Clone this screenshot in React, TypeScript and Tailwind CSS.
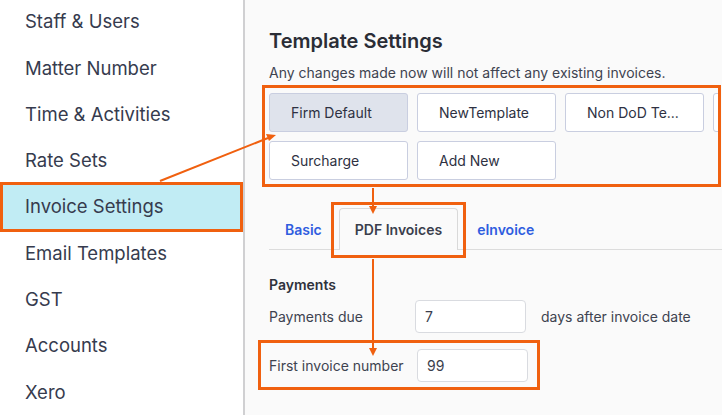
import React from 'react';

const ORANGE = '#f0600f';

const navItems = [
  'Staff & Users',
  'Matter Number',
  'Time & Activities',
  'Rate Sets',
  'Invoice Settings',
  'Email Templates',
  'GST',
  'Accounts',
  'Xero',
];

const templatesRow1 = ['Firm Default', 'NewTemplate', 'Non DoD Te...', ''];
const templatesRow2 = ['Surcharge', 'Add New'];

function TemplateButton({ label, active }: { label: string; active?: boolean }) {
  return (
    <div
      className={`flex h-[39px] w-[139px] shrink-0 items-center rounded-[3px] border border-[#c9cee0] pl-[21px] text-[14px] text-[#2e3142] ${
        active ? 'bg-[#dfe3ec]' : 'bg-white'
      }`}
    >
      {label}
    </div>
  );
}

function Arrows() {
  return (
    <svg className="pointer-events-none absolute inset-0" width="722" height="415" viewBox="0 0 722 415">
      <g stroke={ORANGE} strokeWidth="2" fill="none">
        <line x1="160" y1="181" x2="268" y2="138" />
        <line x1="373" y1="188" x2="373" y2="207" />
        <line x1="373" y1="259" x2="373" y2="349" />
      </g>
      <g fill={ORANGE}>
        <polygon points="276,135 266,134 269,141" />
        <polygon points="373,214 369,206 377,206" />
        <polygon points="373,356 369,348 377,348" />
      </g>
    </svg>
  );
}

export default function App() {
  return (
    <div
      className="relative flex h-[415px] w-[722px] overflow-hidden bg-[#fafafa]"
      style={{ fontFamily: 'Inter, "Noto Sans", sans-serif' }}
    >
      <aside className="w-[245px] shrink-0 border-r-2 border-[#d0d0d2] bg-white">
        <ul className="-mt-[1px]">
          {navItems.map((item) => {
            const active = item === 'Invoice Settings';
            return (
              <li
                key={item}
                className={`relative flex h-[46.3px] items-center pl-[25px] text-[18.5px] text-[#363b4e] ${
                  active ? 'bg-[#c1ecf4]' : ''
                }`}
              >
                {item}
                {active && (
                  <span className="absolute -inset-y-[2px] left-0 right-0 border-[3px] border-[#f0600f]" />
                )}
              </li>
            );
          })}
        </ul>
      </aside>

      <main className="min-w-0 flex-1 pl-[24px] pt-[27px]">
        <h1 className="text-[20px] font-semibold leading-[28px] text-[#2a2d36]">Template Settings</h1>
        <p className="mt-[8px] text-[14px] leading-[20px] text-[#3e4350]">
          Any changes made now will not affect any existing invoices.
        </p>

        <div className="-ml-[7px] mt-[2px] w-[459px] overflow-hidden border-[3px] border-[#f0600f] pb-[4px] pl-[4px] pt-[5px]">
          <div className="flex gap-[9px]">
            {templatesRow1.map((t, i) => (
              <TemplateButton key={i} label={t} active={i === 0} />
            ))}
          </div>
          <div className="mt-[9px] flex gap-[9px]">
            {templatesRow2.map((t) => (
              <TemplateButton key={t} label={t} />
            ))}
          </div>
        </div>

        <div className="mt-[22px] flex h-[41px] items-end border-b border-[#dcdcdc] text-[14px] font-semibold">
          <div className="flex h-full items-center px-4 text-[#2f5ddf]">Basic</div>
          <div className="relative ml-[1px] flex h-[42px] -mb-px items-center rounded-t-[4px] border border-b-0 border-[#d9d9d9] bg-[#fafafa] px-[15px] text-[#3a3e4d]">
            PDF Invoices
            <span className="absolute -left-[9px] -right-[9px] -top-[7px] -bottom-[8px] border-[3px] border-[#f0600f]" />
          </div>
          <div className="flex h-full items-center pl-[19px] text-[#2f5ddf]">eInvoice</div>
        </div>

        <div className="mt-[25px] text-[14px] font-semibold leading-[20px] text-[#2f323c]">Payments</div>

        <div className="mt-[5px] flex items-center text-[14px] text-[#3e4350]">
          <span className="w-[146px]">Payments due</span>
          <div className="flex h-[33px] w-[111px] items-center rounded-[4px] border border-[#d9dbe0] bg-white pl-[9px] text-[#3a3e4d]">
            7
          </div>
          <span className="ml-[15px]">days after invoice date</span>
        </div>

        <div className="relative mt-[16px] inline-flex items-center text-[14px] text-[#3e4350]">
          <span className="w-[148px]">First invoice number</span>
          <div className="flex h-[33px] w-[111px] items-center rounded-[4px] border border-[#d9dbe0] bg-white pl-[9px] text-[#3a3e4d]">
            99
          </div>
          <span className="absolute -left-[11px] -right-[12px] -top-[9px] -bottom-[8px] border-[3px] border-[#f0600f]" />
        </div>
      </main>

      <Arrows />
    </div>
  );
}
